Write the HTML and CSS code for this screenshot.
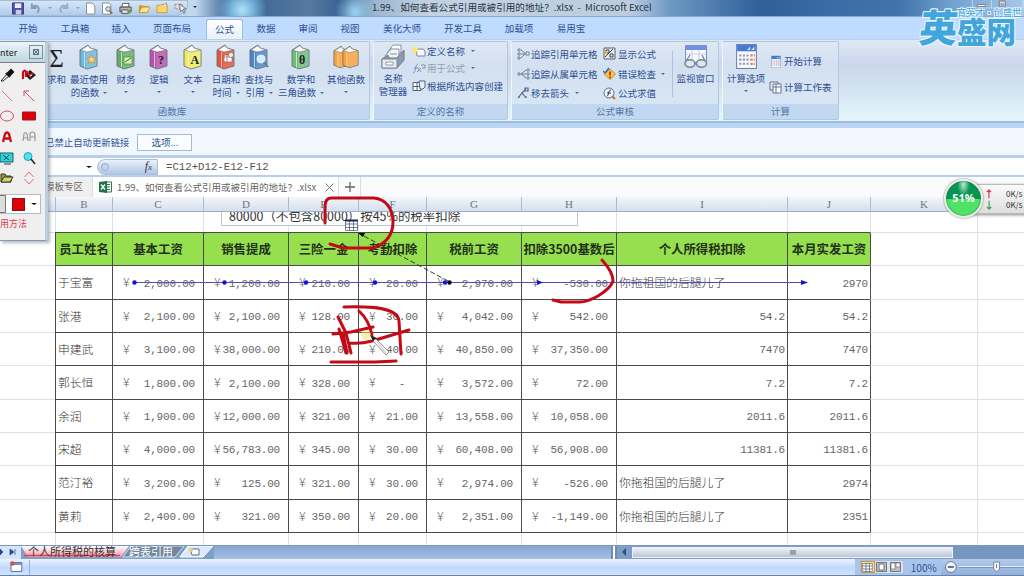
FILE: index.html
```html
<!DOCTYPE html>
<html lang="zh-CN">
<head>
<meta charset="utf-8">
<title>Microsoft Excel</title>
<link rel="stylesheet" href="styles.css">
</head>
<body>
<svg class="defs" width="0" height="0">
  <symbol id="book" viewBox="0 0 20 26"><path d="M1 6 9 1l2 3 7 2v16L8 25 1 22z" fill="currentColor" stroke="#59636e" stroke-width=".8"/><path d="M2 6 9 1.500 11 4l6 2-9 2z" fill="#fafafa" stroke="#777" stroke-width=".5"/><path d="M5.500 8v15.500" stroke="#fff" stroke-opacity=".6"/><path d="M7 9 18 6v16L7 25z" fill="#fff" fill-opacity=".15"/></symbol>
  <symbol id="calc" viewBox="0 0 20 24"><rect x=".5" y=".5" width="19" height="23" fill="#f7f8fc" stroke="#6b82ae"/><path d="M1 1h18v6H1z" fill="#4679d2"/><path d="M11 5h2V3m2 2h2V3" stroke="#fff" fill="none"/><path d="M3 11h11M3 15h11M3 19h11" stroke="#8d98ad" stroke-width="2" stroke-dasharray="2 1.500"/><path d="M14 11h4M14 15h4M14 19h4" stroke="#e88353" stroke-width="2.200" stroke-dasharray="2 1"/></symbol>
  <symbol id="sheet" viewBox="0 0 14 12"><path d="M.5.500h13v11H.5zM.5 4h13M.5 8h13M5 0v12M9.500 0v12" fill="#fff" stroke="#51627f"/></symbol>
</svg>
<div class="app">
  <header class="titlebar">
    <div class="qat">
      <svg width="13" height="13" viewBox="0 0 13 13"><path d="M.5.500h12v12H.5z" fill="#4b50a8" stroke="#33367d"/><path d="M3 1h7v5H3z" fill="#eef"/><path d="M4 8h6v5H4z" fill="#ccd"/></svg>
      <svg width="13" height="12" viewBox="0 0 13 12"><path d="M2 1v5h5M2 6c4-5 10-1 6 5" fill="none" stroke="#8599bb" stroke-width="2"/></svg>
      <i class="dn pale"></i>
      <svg width="13" height="12" viewBox="0 0 13 12"><path d="M10 1v5H5M10 6C6 1 0 5 4 11" fill="none" stroke="#9cabc5" stroke-width="2"/></svg>
      <i class="dn pale"></i>
      <svg width="10" height="13" viewBox="0 0 10 13"><path d="M.5.500h6l3 3v9h-9z" fill="#fff" stroke="#7d8795"/></svg>
      <svg width="12" height="13" viewBox="0 0 12 13"><path d="M.5.500h7l2 2v10h-9z" fill="#fff" stroke="#7d8795"/><circle cx="6.500" cy="7" r="2.500" fill="#cfe0f4" stroke="#667"/><path d="m8 9 3 3" stroke="#a66829" stroke-width="2"/></svg>
      <svg width="14" height="13" viewBox="0 0 14 13"><path d="M4 1h7l-1 4H3z" fill="#fff" stroke="#555"/><path d="M1 5h12v5H1z" fill="#b5bac2" stroke="#444"/><path d="M3 8h7v4H3z" fill="#ddd" stroke="#555"/><circle cx="11" cy="10" r="2" fill="#57a745"/></svg>
      <svg width="13" height="12" viewBox="0 0 13 12"><path d="M1 3h4l1 1h5v7H1z" fill="#d69c29"/><path d="m1 11 3-6h9l-3 6z" fill="#ffe28a" stroke="#a77a27" stroke-width=".7"/></svg>
      <svg width="13" height="12" viewBox="0 0 13 12"><path d="M1 3h4l1-1h6v9H1z" fill="#ffd46b" stroke="#b78427" stroke-width=".7"/><path d="M8 3 11 0v4" fill="#fff" stroke="#777" stroke-width=".6"/></svg>
      <svg width="14" height="14" viewBox="0 0 14 14"><path d="M1 3h8v5H1z" fill="#ddd" stroke="#888" stroke-dasharray="2 1"/><path d="m6 3 1 8 2-2 2 4 1-1-2-4h3z" fill="#fff" stroke="#555" stroke-width=".8"/></svg>
    </div>
    <i class="dn qmore"></i>
    <div class="title">1.99、如何查看公式引用或被引用的地址？.xlsx&nbsp; - &nbsp;Microsoft Excel</div>
    <svg class="winbtns" width="52" height="10" viewBox="0 0 52 10"><path d="M.5 0v8h51V0M19.500 0v8" fill="none" stroke="#e3effa" stroke-opacity=".6"/><path d="M5.500 4.500h8v2h-8z" fill="#fff" stroke="#716d7b" stroke-width=".8"/><path d="M27.500 1h6v5h-6z" fill="#fff" stroke="#716d7b"/><path d="M29 3h3v1.500h-3z" fill="none" stroke="#716d7b" stroke-width=".7"/></svg>
  </header>
  <nav class="tabs">
    <span class="w48">开始</span><span class="w46">工具箱</span><span class="w46">插入</span><span class="w56">页面布局</span><span class="active">公式</span><span class="w46">数据</span><span class="w38">审阅</span><span class="w46">视图</span><span class="w58">美化大师</span><span class="w64">开发工具</span><span class="w48">加载项</span><span class="w56">易用宝</span>
  </nav>
  <section class="ribbon">
    <div class="group g-lib">
      <div class="tools">
        <div class="big b-sum"><b class="sigma">Σ</b><span>求和</span></div>
        <div class="big w44"><svg class="book c-sky"><use href="#book"/><path d="m12.500 11 1.500 3 3 .3-2.200 2 .7 3.200-3-1.700-3 1.700.7-3.200-2.200-2 3-.3z" fill="#ffd36d" stroke="#c77b22" stroke-width=".6"/></svg><span>最近使用</span><span>的函数<i class="dn"></i></span></div>
        <div class="big w30"><svg class="book c-green"><use href="#book"/><path d="M8 13h8v7H8z" fill="#d8efaf" stroke="#397b33" stroke-width=".6"/><path d="m9 18 3-2 3-2" stroke="#267b2c"/></svg><span>财务</span><i class="dn"></i></div>
        <div class="big w36"><svg class="book c-purple"><use href="#book"/><text x="9" y="20">?</text></svg><span>逻辑</span><i class="dn"></i></div>
        <div class="big w32"><svg class="book c-yellow"><use href="#book"/><text x="7.500" y="20">A</text></svg><span>文本</span><i class="dn"></i></div>
        <div class="big w34"><svg class="book c-red"><use href="#book"/><path d="M8 11h8v7H8zM8 13h8M11 11v7" fill="#fff" stroke="#a95455" stroke-width=".7"/><circle cx="15" cy="11" r="2.500" fill="#eee" stroke="#666" stroke-width=".6"/></svg><span>日期和</span><span>时间<i class="dn"></i></span></div>
        <div class="big w32"><svg class="book c-blue"><use href="#book"/><circle cx="12" cy="15" r="4" fill="#d5ebff" stroke="#eef"/><path d="m15 18 4 5" stroke="#67809f" stroke-width="2"/></svg><span>查找与</span><span>引用<i class="dn"></i></span></div>
        <div class="big w52"><svg class="book c-leaf"><use href="#book"/><text x="8" y="20">θ</text></svg><span>数学和</span><span>三角函数<i class="dn"></i></span></div>
        <div class="big w38"><span class="pair"><svg class="book c-orange"><use href="#book"/></svg><svg class="book c-orange"><use href="#book"/></svg></span><span>其他函数</span><i class="dn"></i></div>
      </div>
      <div class="caption">函数库</div>
    </div>
    <div class="group g-names">
      <div class="tools">
        <div class="big w38"><svg width="25" height="25" viewBox="0 0 25 25"><path d="m6 9 6-8h8v7l-7 7z" fill="#fff" stroke="#8790a0"/><path d="m4 12 6-7h8v7l-6 5zM9 10h7" fill="#f2f4f8" stroke="#8790a0"/><path d="m1 15 6-4 1 3h8l7-8v10l-7 8H1z" fill="#8f9aab" stroke="#6d798b"/><path d="M1 15h15v9H1z" fill="#e6ebf2" stroke="#7d8a9d"/><path d="M5 18h7v3H5z" fill="#fff" stroke="#99a"/></svg><span>名称</span><span>管理器</span></div>
        <div class="list">
          <div class="cmd"><svg width="14" height="12" viewBox="0 0 14 12"><path d="M4 4h7l2 2v5H5z" fill="#f4f8ff" stroke="#7888a7"/><path d="m3 0 1 3 3-1-2 3 2 3-3-1-1 2-1-2-2 1 1-3-1-2 2 0z" fill="#ffe273"/></svg>定义名称<i class="dn"></i></div>
          <div class="cmd off"><svg width="14" height="12" viewBox="0 0 14 12"><path d="M1 11c3 0 2-9 5-9M2 6h4m0 0 3 4m0-4-4 4M9 3h4v3h-3" fill="none" stroke="#8393ae"/></svg>用于公式<i class="dn"></i></div>
          <div class="cmd"><svg width="14" height="12" viewBox="0 0 14 12"><path d="M1 2.500h8v8H1zM1 6.500h8M5 2.500v8" fill="#fff" stroke="#51627f"/><path d="M7 1h6v6l-2 2H8z" fill="#e5ecf8" stroke="#567"/></svg>根据所选内容创建</div>
        </div>
      </div>
      <div class="caption">定义的名称</div>
    </div>
    <div class="group g-audit">
      <div class="tools">
        <div class="list l1">
          <div class="cmd"><svg width="13" height="12" viewBox="0 0 13 12"><path d="M1 1h2v2H1zM1 5h2v2H1zM1 9h2v2H1zM4 2l4 3M4 10l4-4M4 6h5M9 4h3v3H9z" fill="#fff" stroke="#627590" stroke-width=".9"/></svg>追踪引用单元格</div>
          <div class="cmd"><svg width="13" height="12" viewBox="0 0 13 12"><path d="M1 5h2v2H1zM4 6l5-4M4 6l5 4M4 6h5M10 1h2v2h-2zM10 5h2v2h-2zM10 9h2v2h-2z" fill="#fff" stroke="#627590" stroke-width=".9"/></svg>追踪从属单元格</div>
          <div class="cmd"><svg width="13" height="12" viewBox="0 0 13 12"><path d="m1 11 4-5 4 5M5 6l4-4M8 1h3v3H8zM1 10h2M8 10h2" fill="none" stroke="#526887" stroke-width="1.200"/></svg>移去箭头<i class="dn"></i></div>
        </div>
        <div class="list l2">
          <div class="cmd"><svg width="13" height="13" viewBox="0 0 13 13"><path d="M1 1h11v11H1z" fill="#e4e8ef" stroke="#566"/><path d="m2 10 8-8M3 3h3v3H3zM7 7h3v3H7z" fill="none" stroke="#445"/><path d="m2 4 2 3" stroke="#edaa36" stroke-width="2"/></svg>显示公式</div>
          <div class="cmd"><svg width="13" height="13" viewBox="0 0 13 13"><path d="m7 2 5.500 5L7 12.500 1.500 7z" fill="#ffc92d" stroke="#c98424"/><path d="M7 4.500v4m0 1v1.500" stroke="#a52d22" stroke-width="1.700"/><path d="m0 4 2 2 4-5" stroke="#3a66c4" stroke-width="1.500" fill="none"/></svg>错误检查<i class="dn"></i></div>
          <div class="cmd"><svg width="13" height="13" viewBox="0 0 13 13"><circle cx="6" cy="6" r="5" fill="#edf4ff" stroke="#5b6f90"/><path d="M4 9c2 0 1-6 4-6M4 6h4" fill="none" stroke="#334"/><path d="m9 9 3 3" stroke="#bb7432" stroke-width="2"/></svg>公式求值</div>
        </div>
        <i class="vsep"></i>
        <div class="big watch"><svg width="25" height="25" viewBox="0 0 25 25"><path d="M2.500 1.500h21v17h-21z" fill="#f6f9ff" stroke="#7891c8"/><path d="M3 2h20v4H3z" fill="#6f93e0"/><path d="M3 10h20M9 6v12M16 6v12" stroke="#c6d0e3"/><ellipse cx="7" cy="19.500" rx="5" ry="3.800" fill="#dce7ee" stroke="#758496" stroke-width="1.500"/><ellipse cx="18.500" cy="19.500" rx="5" ry="3.800" fill="#dce7ee" stroke="#758496" stroke-width="1.500"/><path d="M11 19h3M3 17l4-6M22 17l-3-6" stroke="#758496" stroke-width="1.300"/></svg><span>监视窗口</span></div>
      </div>
      <div class="caption">公式审核</div>
    </div>
    <div class="group g-calc">
      <div class="tools">
        <div class="big w46"><svg width="21" height="25"><use href="#calc"/></svg><span>计算选项</span><i class="dn"></i></div>
        <div class="list l3">
          <div class="cmd"><svg class="ml" width="10" height="13" viewBox="0 0 20 24"><use href="#calc"/></svg>开始计算</div>
          <div class="cmd"><svg width="13" height="13" viewBox="0 0 13 13"><path d="M1 1h8v8H1z" fill="#e5ecf6" stroke="#62738e"/><path d="M4 3h8v9H4zM4 6h8M7 3v9" fill="#fff" stroke="#62738e"/></svg>计算工作表</div>
        </div>
      </div>
      <div class="caption">计算</div>
    </div>
  </section>
  <div class="message"><span>已禁止自动更新链接</span><button class="opt">选项...</button></div>
  <div class="formula">
    <i class="dn black"></i><div class="fxbar"><i class="knob"></i><em>f<small>x</small></em></div><div class="expr">=C12+D12-E12-F12</div>
  </div>
  <div class="files">
    <div class="file1">模板专区</div>
    <div class="file2"><svg width="13" height="12" viewBox="0 0 13 12"><path d="M6 1h6.500v10H6z" fill="#fff" stroke="#2b7a4b"/><path d="M8 3.500h3M8 6h3M8 8.500h3" stroke="#2b7a4b"/><path d="M0 1 8 0v12l-8-1z" fill="#217346"/><path d="m2 3.500 4 5m0-5-4 5" stroke="#fff" stroke-width="1.300"/></svg><span>1.99、如何查看公式引用或被引用的地址？.xlsx</span><svg class="x" width="9" height="9" viewBox="0 0 9 9"><path d="m.5.500 8 8m0-8-8 8" stroke="#777"/></svg></div>
    <div class="plus"><svg width="10" height="10" viewBox="0 0 10 10"><path d="M5 0v10M0 5h10" stroke="#666" stroke-width="1.300"/></svg></div>
  </div>
  <div class="cols letters"><span></span><span>B</span><span>C</span><span>D</span><span>E</span><span>F</span><span>G</span><span>H</span><span>I</span><span>J</span><span>K</span><span></span></div>
  <main class="sheet">
    <div class="cols lines"><span></span><span></span><span></span><span></span><span></span><span></span><span></span><span></span><span></span><span></span><span></span><span></span></div>
    <div class="note"><p>80000（不包含80000）按45%的税率扣除</p></div>
    <div class="rows">
      <div class="cols row head"><span></span><span>员工姓名</span><span>基本工资</span><span>销售提成</span><span>三险一金</span><span>考勤扣除</span><span>税前工资</span><span>扣除3500基数后</span><span>个人所得税扣除</span><span>本月实发工资</span><span></span><span></span></div>
      <div class="cols row t"><span></span><span>于宝富</span><span><u>¥</u>2,000.00</span><span><u>¥</u>1,200.00</span><span><u>¥</u>210.00</span><span><u>¥</u>20.00</span><span><u>¥</u>2,970.00</span><span><u>¥</u>-530.00</span><span class="txt">你拖祖国的后腿儿了</span><span>2970</span><span></span><span></span></div>
      <div class="cols row"><span></span><span>张港</span><span><u>¥</u>2,100.00</span><span><u>¥</u>2,100.00</span><span><u>¥</u>128.00</span><span><u>¥</u>30.00</span><span><u>¥</u>4,042.00</span><span><u>¥</u>542.00</span><span>54.2</span><span>54.2</span><span></span><span></span></div>
      <div class="cols row"><span></span><span>申建武</span><span><u>¥</u>3,100.00</span><span><u>¥</u>38,000.00</span><span><u>¥</u>210.00</span><span><u>¥</u>40.00</span><span><u>¥</u>40,850.00</span><span><u>¥</u>37,350.00</span><span>7470</span><span>7470</span><span></span><span></span></div>
      <div class="cols row t"><span></span><span>郭长恒</span><span><u>¥</u>1,800.00</span><span><u>¥</u>2,100.00</span><span><u>¥</u>328.00</span><span><u>¥</u>-&nbsp;&nbsp;</span><span><u>¥</u>3,572.00</span><span><u>¥</u>72.00</span><span>7.2</span><span>7.2</span><span></span><span></span></div>
      <div class="cols row"><span></span><span>余润</span><span><u>¥</u>1,900.00</span><span><u>¥</u>12,000.00</span><span><u>¥</u>321.00</span><span><u>¥</u>21.00</span><span><u>¥</u>13,558.00</span><span><u>¥</u>10,058.00</span><span>2011.6</span><span>2011.6</span><span></span><span></span></div>
      <div class="cols row"><span></span><span>宋超</span><span><u>¥</u>4,000.00</span><span><u>¥</u>56,783.00</span><span><u>¥</u>345.00</span><span><u>¥</u>30.00</span><span><u>¥</u>60,408.00</span><span><u>¥</u>56,908.00</span><span>11381.6</span><span>11381.6</span><span></span><span></span></div>
      <div class="cols row t"><span></span><span>范汀裕</span><span><u>¥</u>3,200.00</span><span><u>¥</u>125.00</span><span><u>¥</u>321.00</span><span><u>¥</u>30.00</span><span><u>¥</u>2,974.00</span><span><u>¥</u>-526.00</span><span class="txt">你拖祖国的后腿儿了</span><span>2974</span><span></span><span></span></div>
      <div class="cols row"><span></span><span>黄莉</span><span><u>¥</u>2,400.00</span><span><u>¥</u>321.00</span><span><u>¥</u>350.00</span><span><u>¥</u>20.00</span><span><u>¥</u>2,351.00</span><span><u>¥</u>-1,149.00</span><span class="txt">你拖祖国的后腿儿了</span><span>2351</span><span></span><span></span></div>
    </div>
  </main>
  <div class="bottom">
    <svg width="214" height="13" viewBox="0 0 214 13"><defs><linearGradient id="pink" x2="0" y2="1"><stop offset="0" stop-color="#fff"/><stop offset="1" stop-color="#f49aa5"/></linearGradient></defs><path d="M0 0h21v13H0z" fill="#d5e4f9"/><path d="m0 3 3 3-3 3zM10 3l4 3-4 3zM15 3v6" fill="#234a94" stroke="#234a94" stroke-width=".7"/><path d="M21 0h108l-8 11H28z" fill="url(#pink)"/><path d="M24 9.500h96" stroke="#e34451" stroke-width="1.500"/><path d="m131 0-8 11h52l9-11z" fill="#73879f" stroke="#fff" stroke-width=".7"/><path d="m188 0-8 11h23l10-11z" fill="#dce9fc" stroke="#fff"/><path d="M190 3h9v6h-7z" fill="#fff" stroke="#58709a"/><circle cx="191" cy="4" r="2" fill="#f5cd68"/><text x="28" y="10" class="st">个人所得税的核算</text><text x="129" y="10" class="st s2">跨表引用</text></svg>
    <div class="fill"></div>
    <i class="split"></i><i class="left"></i><div class="thumb"><i></i></div><div class="track"></div>
  </div>
  <footer class="status">
    <svg class="rec" width="13" height="12" viewBox="0 0 13 12"><path d="M1 1.500h11v9H1z" fill="#fff" stroke="#5370a7"/><path d="M1 2h11v2H1z" fill="#6f8fd0"/><circle cx="2.500" cy="2.500" r="2.300" fill="#d84e42"/></svg><i class="sep"></i>
    <div class="views"><span class="on"><svg width="11" height="9" viewBox="0 0 14 12"><use href="#sheet"/></svg></span><span><svg width="11" height="10" viewBox="0 0 11 10"><path d="M.5.500h10v9H.5z" fill="#b8bfca" stroke="#777"/><path d="M3 2h5v6H3z" fill="#fff" stroke="#777"/></svg></span><span><svg width="11" height="10" viewBox="0 0 11 10"><path d="M.5.500h10v9H.5z" fill="#b8bfca" stroke="#777"/><path d="M1 1h4v6H1zM6 1h4v4H6z" fill="#fff" stroke="#777" stroke-width=".7"/></svg></span></div>
    <span class="pct">100%</span>
    <svg width="84" height="16" viewBox="0 0 84 16"><path d="M18 7.500h66" stroke="#e7f1ff"/><path d="M18 8.500h66" stroke="#7895be"/><circle cx="10" cy="8" r="5.500" fill="#eef3fa" stroke="#67788e"/><path d="M7 8h6" stroke="#445" stroke-width="1.500"/><path d="M53.500 3h6v7l-3 3-3-3z" fill="#fff" stroke="#6c7d95"/><path d="M56.500 5v4" stroke="#667"/></svg>
  </footer>

  <aside class="painter">
    <div class="ptop"><span>nter</span><b><svg width="6" height="6" viewBox="0 0 6 6"><path d="M.5.500h5v5h-5zM1 1l4 4m0-4L1 5" fill="none" stroke="#445" stroke-width=".8"/></svg></b></div>
    <div class="pgrid">
      <svg viewBox="0 0 16 16"><path d="m2 14 6-7 2 2-6 5z" fill="#fff" stroke="#222"/><path d="m7 6 4 4M9 6l3-3 2 2-3 3z" stroke="#111" stroke-width="2"/></svg>
      <svg viewBox="0 0 16 16"><path d="m4 8 5-5 6 5-6 5z" fill="#222"/><path d="M2 12V5q2-3 3 0v5" stroke="#c40c16" stroke-width="2.200" fill="none"/><path d="m6 4 3 5 3-3" stroke="#e22" stroke-width="1.500" fill="none"/><path d="m9 9 2-1" stroke="#fff"/></svg>
      <svg viewBox="0 0 16 16"><path d="m3 3 10 10" stroke="#d67484"/></svg>
      <svg viewBox="0 0 16 16"><path d="m4 4 9 9M3 8V3h5" fill="none" stroke="#d04b5d"/></svg>
      <svg viewBox="0 0 16 16"><ellipse cx="8" cy="8" rx="6.500" ry="5" fill="none" stroke="#d04b5d"/></svg>
      <svg viewBox="0 0 16 16"><path d="M1.500 4h13v8h-13z" fill="#e00008" stroke="#9d1b22"/></svg>
      <svg viewBox="0 0 16 16"><path d="M4 13 6 5q2-3 4 0l2 8M5 9.500h6" fill="none" stroke="#c90918" stroke-width="2.300"/></svg>
      <svg viewBox="0 0 16 16"><path d="m2 12 1-7q1.500-3 3 0l1 7M2 9h5M9 12V6q0-3 2.500-3T14 6v6M9 8h5" fill="none" stroke="#999" stroke-width="1.200"/></svg>
      <svg viewBox="0 0 16 16"><path d="M1 3h13v9H1z" fill="#2bd3df" stroke="#24565f"/><path d="m4 5 6 5m0-5-5 5M5 14h7" stroke="#174048"/></svg>
      <svg viewBox="0 0 16 16"><circle cx="7" cy="6.500" r="4" fill="#4de6ef" stroke="#279eae"/><path d="m10 9 4 5" stroke="#222" stroke-width="1.500"/></svg>
      <svg viewBox="0 0 16 16"><path d="M2 4h4l1 2h5v6H2z" fill="#9a9b2b" stroke="#333"/><path d="m2 12 3-5h9l-3 5z" fill="#d8d65f" stroke="#333"/></svg>
      <svg viewBox="0 0 16 16"><path d="m3.500 7 4.500-5 4.500 5M3.500 9 8 14l4.500-5" fill="none" stroke="#e46b80"/></svg>
    </div>
    <div class="pcolor"><i class="more"></i><i class="red"></i><i class="dn black"></i></div>
    <div class="phelp">用方法</div>
  </aside>
  <svg class="marks" width="1024" height="576" viewBox="0 0 1024 576">
    <path d="M134 282.500h672" stroke="#554bc4"/>
    <g fill="#1010dc"><circle cx="134.500" cy="282.500" r="2.200"/><circle cx="224.500" cy="282.500" r="2.200"/><circle cx="306" cy="282.500" r="2.200"/><circle cx="375" cy="282.500" r="2.200"/><circle cx="445" cy="282.500" r="2.200"/><path d="m537 280 6 2.500-6 2.500zM801 280l7 2.500-7 2.500z"/></g>
    <circle cx="449.500" cy="282.500" r="2.200"/>
    <path d="M448 281 360 234" stroke="#333" stroke-dasharray="5 2.500" fill="none"/><path d="m358 233 7 0-2 4z"/>
    <g><path d="M345.500 220.500h12v10h-12zM345 224h13M345 227.500h13M349.500 220v11M353.500 220v11" fill="#fff" stroke="#536178" stroke-width=".8"/><path d="M345 220.500h13" stroke="#152360" stroke-width="2"/></g>
    <g fill="none" stroke="#c50a17" stroke-width="3" stroke-linecap="round" stroke-linejoin="round">
      <path d="M325 223v-16q0-9 6-9h43c12 1 19 11 19 24 0 14-9 22-19 26h-31l-13-4"/>
      <path d="M602 260q11 12 11 21-2 7-15 15-11 6-18 6h-19l-8-2"/>
      <path d="M344 307c30-1 54 1 55 14l2 33M359 311q10 9 13 24M338 317l8 16 5 20M333 334l18-2 22-5M339 329l7 24M343 333l4 20M349 343q12 1 23-2l37-11M331 362h44l21-1"/>
    </g>
    <circle cx="366" cy="335" r="5" fill="#f5de6d" opacity=".55"/><path d="m371 335 3 7 12 13 3-3-12-12z" fill="#fff" stroke="#777" stroke-width=".8"/><path d="m370 335 3 6 4-3z" fill="#222"/><path d="m377 342 9 11" stroke="#bbb"/>
  </svg>
  <div class="net"><div><b class="up">↑</b><span>0K/s</span></div><div><b class="down">↓</b><span>0K/s</span></div></div>
  <div class="ball">51%</div>
  <div class="brand"><span class="ying">英</span><div><small>育英才·创盛世</small><span>盛网</span></div></div>
</div>
</body>
</html>
```
FILE: styles.css
```css
*{box-sizing:border-box}
body{margin:0;overflow:hidden;font-family:"Noto Sans CJK SC",sans-serif;color:#2f4f92}
.defs{position:absolute}
.app{position:relative;width:1024px;height:576px;display:flex;flex-direction:column;background:#fff;overflow:hidden;font-size:9.5px}
.app>*{flex-shrink:0}
i,em{font-style:normal}
.dn{display:inline-block;width:4px;border:2px solid transparent;border-top:2.5px solid #4e689a;border-bottom:0;margin-left:4px;vertical-align:middle}
.dn.black{border-top-color:#111;border-left-width:3px;border-right-width:3px;width:6px}
.dn.pale{opacity:.5;margin:0}
.titlebar{height:17px;display:flex;align-items:flex-start;background:radial-gradient(circle at 242px 10px,#b5e0f7 0,#78b5dc 11px,transparent 25px),radial-gradient(circle at 355px 12px,#9ad4f1 0,transparent 20px),linear-gradient(90deg,#c1d9ee 0 195px,#365f91 230px,#55799f 310px,#365f91 345px,#9db5cf 375px,#c3d2e3 430px,#bccde1 630px,#6e99c5 670px,#315f98 760px,#3c6da6 840px,#4174aa 900px,#6fa0cf 950px,#a7c8e8);border-bottom:1px solid #8aa9ca}
.qat{width:188px;height:16px;padding-left:12px;display:flex;align-items:center;gap:6px;background:linear-gradient(#d7e6f7,#b2cbea);border:1px solid #a4bed9;border-radius:0 0 12px 0;border-left:0}
.qmore{margin:6px 0 0 5px;border-top-color:#234}
.title{margin-left:175px;line-height:15px;font-size:9.600px;color:#29343f;white-space:nowrap;width:290px}
.winbtns{margin-left:313px}
.tabs{height:22px;display:flex;padding-left:4px;background:#bfdbff;font-size:9.5px}
.tabs span{text-align:center;line-height:23px}
.tabs .active{width:37px;margin-left:6px;margin-top:2px;line-height:19px;background:linear-gradient(#fff,#e8f0fb);border:1px solid #9db9de;border-bottom:0;border-radius:3px 3px 0 0}
.w30{width:30px}.w32{width:32px}.w34{width:34px}.w36{width:36px}.w38{width:38px}.w44{width:44px}.w46{width:46px}.w48{width:48px}.w52{width:52px}.w56{width:56px}.w58{width:58px}.w64{width:64px}
.ribbon{height:84px;padding:1px 0 1px;display:flex;gap:3px;background:linear-gradient(#e0e8f4,#cbd8ec 28%,#cddced 45%,#e3f4fc 95%);border-bottom:2px solid #9bbddf;border-top:1px solid #bdd0e9}
.group{display:flex;flex-direction:column;border:1px solid #b0c8e2;border-left-color:#edf5ff;border-radius:2px;background:linear-gradient(#dfe8f4,#d3e0f0 30%,#dae7f5)}
.g-lib{width:370px}.g-names{width:135px}.g-audit{width:208px}.g-calc{width:117px}
.caption{height:15px;line-height:15px;text-align:center;background:#c1d8f0;color:#5574a7}
.g-lib .caption{padding-right:26px}
.tools{flex:1;display:flex;min-height:0}
.big{display:flex;flex-direction:column;align-items:center;white-space:nowrap;line-height:13px;padding-top:2px}
.big>svg,.pair{margin-bottom:3px;flex-shrink:0}
.big>.dn{margin:5px 0 0}
.big .dn{flex-shrink:0}
.book{width:20px;height:26px}
.book text{font:bold 12px "Liberation Serif",serif;fill:#222}
.c-sky{color:#6eb9dc}.c-green{color:#67ad65}.c-purple{color:#b554ac}.c-yellow{color:#eceb62}.c-red{color:#df553e}.c-blue{color:#4f87c5}.c-leaf{color:#70bd78}.c-orange{color:#f5a341}
.pair{height:26px;display:flex}.pair svg+svg{margin-left:-9px}
.pair .book{width:18px}
.b-sum{width:66px;padding-left:45px}.sigma{font:25px/29px "Liberation Serif",serif;color:#222}
.list{display:flex;flex-direction:column}
.cmd{display:flex;align-items:center;gap:1px;height:17.500px;white-space:nowrap}
.cmd .dn{margin-left:5px}
.off{color:#929dac}
.g-audit .l1{padding:2px 0 0 5px;width:91px}.l1 .cmd,.l2 .cmd{height:19.700px}
.l2{padding-top:2px;width:69px}.l2 .cmd{gap:2px}
.l2 .dn{margin-left:3px}
.vsep{width:1px;height:46px;margin-top:9px;background:#aec3db}
.watch{width:45px}
.g-calc .l3{padding-top:6px}.l3 .cmd{height:26px;gap:2px}.ml{margin:0 1px 0 2px}
.message{height:35px;margin:0;padding:4px 0 3px 45px;display:flex;align-items:center;border-top:5px solid #bcd5f4;border-bottom:3px solid #b7cfec;background:#f0f7ff;font-size:9.4px}
.opt{width:55px;height:17px;margin-left:8px;border:1px solid #a5b9d3;background:#fafdff;color:#2c4b8d;font:9.5px/12px "Noto Sans CJK SC",sans-serif;padding:0}
.formula{height:17px;padding-left:86px;display:flex;align-items:center;background:#fff}
.formula>.dn{margin:0 5px 0 0}
.fxbar{width:61px;height:16px;border-radius:8px 0 0 8px;background:linear-gradient(#eaf2fd,#afc7e6);border:1px solid #aabfd9;display:flex;align-items:center;justify-content:space-between;padding:0 5px 0 3px}
.knob{width:8px;height:8px;border-radius:50%;background:#c6d6e9;border:1px solid #97abc5}
.fxbar em{font:italic 12px "Liberation Serif",serif;color:#334}.fxbar small{font-size:9px}
.expr{padding-left:8px;font:10.700px "Liberation Mono",monospace;color:#555}
.files{height:22px;border-top:2px solid #b9cee8;display:flex;font-size:9.5px;color:#666;background:#fafbfc}
.file1{width:93px;padding-left:45px;line-height:19px;background:#efefef;border-right:1px solid #ddd;white-space:nowrap}
.file2{width:246px;padding-left:6px;display:flex;align-items:center;gap:5px;background:#fff;border-right:1px solid #ddd;white-space:nowrap}.file2 span{width:202px}.x{margin-left:1px}
.plus{width:22px;display:grid;place-items:center;border-right:1px solid #ddd}
.cols{display:grid;grid-template-columns:55px 57px 91px 85px 70px 68px 95px 95px 171px 83px 107px 47px}
.letters{height:15px;background:linear-gradient(#f3f6fb,#d7dfec);border-bottom:1px solid #97afce;text-align:center;font:11px/15px "Liberation Serif",serif;color:#6b7584}
.letters span+span{border-left:1px solid #a9bbd3}
.sheet{height:333px;position:relative;background:#fff}
.lines{position:absolute;inset:0}
.lines span+span{border-left:1px solid #dce0ed}
.note{position:relative;height:20px;padding-left:221px;overflow:hidden}
.note p{margin:0;width:357px;height:14px;border:1px solid #bbc3d0;border-top:0;background:#fff;padding-left:7px;font-size:12.450px;line-height:8px;color:#333;overflow:hidden;white-space:nowrap}
.rows{position:relative}
.row{height:33px;color:#666}
.row.t,.row:last-child{height:34px}
.row span{position:relative;border-left:1px solid #4b4b4b;border-top:1px solid #4b4b4b;display:flex;align-items:center;justify-content:flex-end;padding:2px 8px 0 0;font:11px "Liberation Mono",monospace;letter-spacing:-.2px;white-space:nowrap}
.row:last-child span{border-bottom:1px solid #4b4b4b}
.row span:first-child{border-left:0;border-top-color:#dce0ed;border-bottom-color:#dce0ed}
.row span:nth-child(11){border-top-color:#dce0ed;border-bottom-color:#dce0ed}
.row span:nth-child(12){border-color:#dce0ed}
.row:last-child span:first-child,.row:last-child span:nth-child(n+11){border-bottom-color:#dce0ed}
.row span:nth-child(2),.row .txt{font:300 11.800px/16px "Noto Sans CJK SC",sans-serif;letter-spacing:0;justify-content:flex-start;padding:0 0 1px 2px;color:#333}
.row span:nth-child(9):not(.txt),.row span:nth-child(10){padding-right:2px}
.row u{margin-right:auto;padding-left:10px;text-decoration:none;font:300 12.500px/14px "Noto Sans CJK SC",sans-serif;width:18px;margin-top:-3px}
.row.head span:not(:first-child):nth-child(-n+10){background:#96e050;justify-content:center;padding:0 0 1px;font:bold 12.400px/16px "Noto Sans CJK SC",sans-serif;letter-spacing:0;color:#233118}
.bottom{height:14px;display:flex;background:#7e9fc9;border-top:1px solid #7b98bf}
.fill{width:397px;background:linear-gradient(#86a6d0,#a6c0e4)}
.st{font:11px "Noto Sans CJK SC",sans-serif;fill:#333}.s2{fill:#fff}
.split{width:6px;background:#fff;border:2px solid #6f8caf;border-width:0 2px}
.left{border:4px solid transparent;border-right:4px solid #334e75;margin:2px 6px 0 1px;height:8px;width:8px}
.thumb{width:321px;margin:1px 0;background:linear-gradient(#eef1f7,#bbc6d7);border:1px solid #eef;display:grid;place-items:center}.thumb i{width:6px;height:5px;background:#97a1b0}
.track{flex:1;background:#7796bf}
.status{height:17px;border-bottom:1px solid #6482ac;display:flex;align-items:center;background:linear-gradient(90deg,transparent 0 855px,#a9c4ea 855px),linear-gradient(#eaf3ff,#c0d8fa 55%,#d2e4fc)}
.rec{margin-left:10px}.sep{width:1px;height:15px;background:#9ab2d5;margin-left:6px}
.views{display:flex;margin-left:830px;height:14px;border:1px solid #aebed5;background:#d4e3f7}
.views span{width:14px;display:grid;place-items:center}.views .on{background:#ffdc85;border:1px solid #c89542}
.pct{width:32px;margin-left:7px;font-size:10px}
.status>svg:last-child{margin-left:-1px;background:linear-gradient(#b4cbec,#91b0dc)}
.painter{position:absolute;left:0;top:41px;width:48px;height:200px;background:#f0eff0;border:1px solid #8c9aa7;border-left:0;border-right:3px solid #bccddb;box-shadow:2px 2px 3px #5677;overflow:hidden}
.ptop{height:21px;background:linear-gradient(#eaf6fb,#bdd6df);display:flex;align-items:center;justify-content:space-between;color:#222;font-size:9px;border-bottom:1px solid #77818a}
.ptop b{width:14px;height:14px;border:1px solid #81919c;margin-right:2px;display:grid;place-items:center}
.pgrid{display:grid;grid-template-columns:22px 22px;grid-auto-rows:20.700px;padding-top:2px;margin-left:-4px}
.pgrid svg{width:16px;height:16px;margin:2px auto 0 3px}
.pcolor{display:flex;align-items:center;margin:5px 4px 0 0;height:20px;background:#fff;border:1px solid #bbb;border-left:0}
.more{width:6px;height:18px;background:#ddd;border:1px solid #777;border-left:0}.red{width:13px;height:13px;background:#e00008;border:1px solid #85141c;margin-left:6px}
.pcolor .dn{margin-left:6px}
.phelp{color:#df3948;font-size:9px;line-height:20px}
.marks{position:absolute;left:0;top:0}
.net{position:absolute;left:960px;top:184px;width:70px;height:30px;background:linear-gradient(#fafafa,#dedede);border:1px solid #bbb;padding-left:23px;padding-top:3px;font-size:8px;line-height:11px;color:#333;box-shadow:0 1px 3px #888}
.net div{display:flex;gap:14px}.net b{width:8px;font-size:10px}.up{color:#df2631}.down{color:#24a34c}
.ball{position:absolute;left:944px;top:179px;width:39px;height:39px;border-radius:50%;background:radial-gradient(ellipse at 50% 10%,#bfe8d0 0,transparent 25%),linear-gradient(#079556 0 50%,#50e267 50%);border:2px solid #e7eee9;box-shadow:0 0 2px #555,inset 0 0 2px #175f2f;color:#fff;text-align:center;font:bold 11px/34px "Noto Sans",sans-serif}
.brand{position:absolute;left:920px;top:7px;display:flex;color:#42a5db;text-shadow:-1px -1px #eaf6ff,1px -1px #eaf6ff,-1px 1px #eaf6ff,1px 1px #eaf6ff}
.ying{width:37px;font:900 38px/38px "Noto Sans CJK SC",sans-serif;transform:skewX(-7deg)}
.brand div{display:flex;flex-direction:column;width:64px}.brand small{font-size:9.200px;line-height:11px;white-space:nowrap}.brand div span{font:900 29.500px/28px "Noto Sans CJK SC",sans-serif;margin-top:-2px}
```
